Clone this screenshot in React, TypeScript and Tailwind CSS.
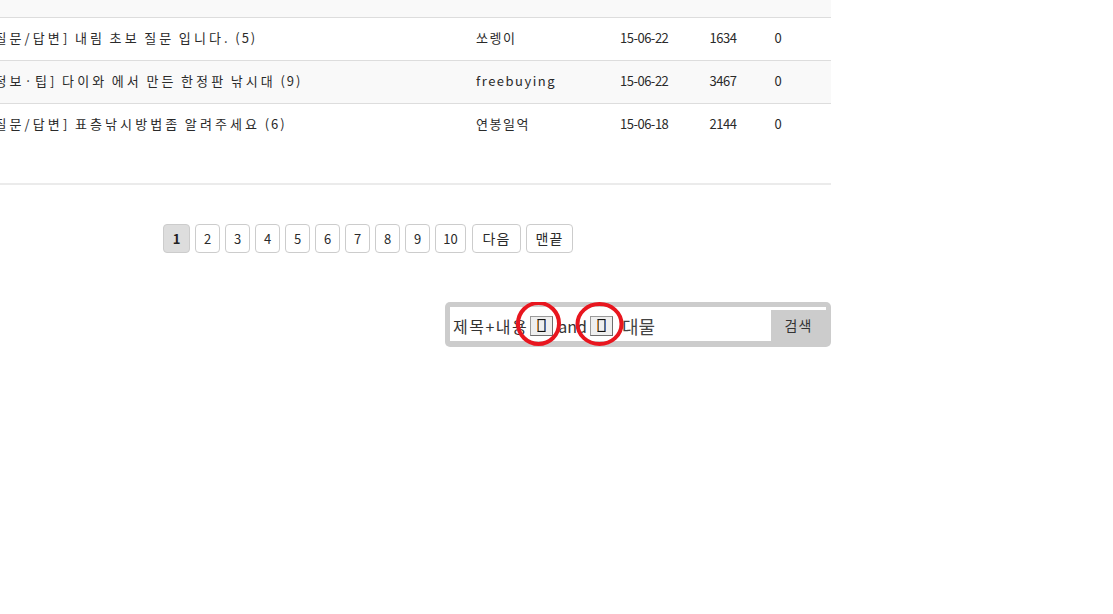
import React from 'react';

type Post = {
    title: string;
    count: string;
    author: string;
    date: string;
    hits: string;
    comments: string;
};

const posts: Post[] = [
    { title: '[질문/답변] 감성돔 원투 채비 질문 좀 드릴께요', count: '(2)', author: '바람길', date: '15-06-23', hits: '1021', comments: '0' },
    { title: '[질문/답변] 내림 초보 질문 입니다.', count: '(5)', author: '쏘렝이', date: '15-06-22', hits: '1634', comments: '0' },
    { title: '[정보·팁] 다이와 에서 만든 한정판 낚시대', count: '(9)', author: 'freebuying', date: '15-06-22', hits: '3467', comments: '0' },
    { title: '[질문/답변] 표층낚시방법좀 알려주세요', count: '(6)', author: '연봉일억', date: '15-06-18', hits: '2144', comments: '0' },
];

const pages = ['1', '2', '3', '4', '5', '6', '7', '8', '9'];

function Tofu() {
    return (
        <span className="inline-flex h-[20px] w-[23px] items-center justify-center border border-[#9a9a9a] border-r-[#6f6f6f] border-b-[#6f6f6f] bg-[#efefef]">
            <svg width="9" height="13" viewBox="0 0 9 13">
                <rect x="1" y="0.5" width="7" height="12" fill="none" stroke="#111" strokeWidth="1.2" />
                <line x1="0.5" y1="1" x2="0.5" y2="12" stroke="#e08a2c" strokeWidth="1" />
                <line x1="8.6" y1="1" x2="8.6" y2="12" stroke="#3a6fd8" strokeWidth="0.8" />
            </svg>
        </span>
    );
}

export default function App() {
    return (
        <div className="min-h-screen bg-white font-['Noto_Sans_CJK_KR','Noto_Sans',sans-serif] text-[#2a2a2a] overflow-hidden">
            <div className="ml-[-95px] w-[926px]">
                {/* List */}
                <div className="mt-[-26px]">
                    {posts.map((p, i) => (
                        <div
                            key={i}
                            className={`flex h-[43px] items-center border-t border-[#dddddd] text-[13px] ${i === 0 ? 'pb-[9px]' : 'pb-[3px]'} ${i % 2 === 0 ? 'bg-[#f9f9f9]' : 'bg-white'}`}
                        >
                            <div className="w-[571px] pl-[82px] whitespace-nowrap tracking-[3.1px] [word-spacing:-1.5px]">
                                {p.title} <span className="tracking-[2px]">{p.count}</span>
                            </div>
                            <div className="w-[144px] tracking-[1.5px]">{p.author}</div>
                            <div className="w-[75px] tracking-[-0.5px]">{p.date}</div>
                            <div className="w-[56px] text-center tracking-[-0.5px]">{p.hits}</div>
                            <div className="w-[54px] text-center">{p.comments}</div>
                        </div>
                    ))}
                </div>

                {/* Bottom line */}
                <div className="mt-[37px] h-[2px] bg-[#ebebeb]" />

                {/* Pagination */}
                <div className="mt-[39px] flex justify-center gap-[5px] text-[13px]">
                    {pages.map((n, i) => (
                        <span
                            key={n}
                            className={`flex h-[29px] items-center justify-center rounded-[4px] border border-[#cccccc] ${i === 0 ? 'w-[27px] bg-[#dddddd] font-bold text-[#222]' : 'w-[25px] bg-white'}`}
                        >
                            {n}
                        </span>
                    ))}
                    <span className="flex h-[29px] w-[31px] items-center justify-center rounded-[4px] border border-[#cccccc] bg-white">10</span>
                    <span className="ml-[1px] flex h-[29px] w-[49px] items-center justify-center rounded-[4px] border border-[#cccccc] bg-white text-[14px] tracking-[1px]">다음</span>
                    <span className="flex h-[29px] w-[47px] items-center justify-center rounded-[4px] border border-[#cccccc] bg-white text-[14px] tracking-[1px]">맨끝</span>
                </div>

                {/* Search */}
                <div className="mt-[49px] flex justify-end">
                    <div className="relative h-[45px] w-[386px] rounded-[5px] bg-[#cccccc] pl-[5px] pr-[5px] pt-[5px]">
                        <div className="flex h-[34px] bg-white pt-[3px]">
                            <div className="flex flex-1 items-center text-[16px] leading-none text-[#333] whitespace-nowrap">
                                <span className="ml-[3px] tracking-[1.5px]">제목+내용</span>
                                <span className="ml-[2px]"><Tofu /></span>
                                <span className="ml-[5px]">and</span>
                                <span className="ml-[3px]"><Tofu /></span>
                                <span className="ml-[9px] text-[18px] text-[#444]">대물</span>
                            </div>
                            <div className="flex w-[55px] items-center justify-center bg-[#cccccc] text-[14px] tracking-[1px] text-[#333]">검색</div>
                        </div>
                        <svg className="pointer-events-none absolute left-0 top-0" width="386" height="45" viewBox="0 0 386 45">
                            <ellipse cx="93.5" cy="21.5" rx="20.5" ry="20.5" fill="none" stroke="#e8161f" strokeWidth="4" />
                            <ellipse cx="154.5" cy="22" rx="22" ry="20" fill="none" stroke="#e8161f" strokeWidth="4" />
                        </svg>
                    </div>
                </div>
            </div>
        </div>
    );
}
